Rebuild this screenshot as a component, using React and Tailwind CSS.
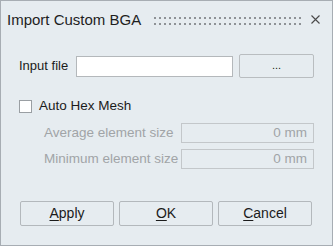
import React from "react";

const font = { fontFamily: '"Liberation Sans", Arial, sans-serif' };

function Grip() {
  // punktierter Griffbereich in der Titelleiste
  const dots = [];
  for (let i = 0; i < 30; i++) {
    dots.push(<rect key={"a" + i} x={i * 5} y={0} width={2} height={2} fill="#8e9296" />);
    dots.push(<rect key={"b" + i} x={i * 5} y={6} width={2} height={2} fill="#8e9296" />);
  }
  return (
    <svg width="148" height="8" viewBox="0 0 148 8" className="shrink-0">
      {dots}
    </svg>
  );
}

function Btn({ u, rest }) {
  return (
    <button className="flex h-[25px] w-[94px] items-center justify-center rounded-[2px] border border-[#b3b8bc] bg-[#e6ecf0] text-[14px] text-[#1b1b1b]">
      <span className="underline underline-offset-2">{u}</span>
      {rest}
    </button>
  );
}

export default function App() {
  return (
    <div
      style={font}
      className="flex h-[246px] w-[333px] flex-col border border-[#a7adb3] bg-[#e6ecf0]"
    >
      {/* Titelleiste */}
      <div className="flex h-[38px] items-center pl-[6px] pr-[10px]">
        <span className="text-[15px] text-[#1e1e1e]">Import Custom BGA</span>
        <div className="ml-[13px] mt-[1px]">
          <Grip />
        </div>
        <svg width="9" height="9" viewBox="0 0 9 9" className="ml-[9px] mt-[-1px]">
          <path d="M0.5 0.5 L8.5 8.5 M8.5 0.5 L0.5 8.5" stroke="#4a4a4a" strokeWidth="1.1" />
        </svg>
      </div>

      <div className="flex flex-col px-[18px]">
        <div className="mt-[15px] flex h-[24px] items-center">
          <span className="w-[57px] text-[13px] text-[#1b1b1b]">Input file</span>
          <div className="h-[21px] w-[157px] border border-[#b4b8bb] bg-white" />
          <button className="ml-[6px] flex h-[24px] flex-1 items-center justify-center rounded-[2px] border border-[#b9bdc0] bg-[#e6ecf0] pb-[2px] text-[11px] text-[#1b1b1b]">
            ...
          </button>
        </div>

        <div className="mt-[22px] flex h-[13px] items-center">
          <div className="h-[13px] w-[13px] border border-[#9a9fa3] bg-white" />
          <span className="ml-[7px] text-[13.5px] text-[#1b1b1b]">Auto Hex Mesh</span>
        </div>

        <div className="mt-[10px] flex h-[20px] items-center pl-[25px]">
          <span className="w-[137px] text-[13.5px] text-[#a1a4a7]">Average element size</span>
          <div className="flex h-[20px] flex-1 items-center justify-end border border-[#c3c7ca] pr-[6px] text-[13.5px] text-[#a1a4a7]">
            0 mm
          </div>
        </div>

        <div className="mt-[6px] flex h-[20px] items-center pl-[25px]">
          <span className="w-[137px] text-[13.5px] text-[#a1a4a7]">Minimum element size</span>
          <div className="flex h-[20px] flex-1 items-center justify-end border border-[#c3c7ca] pr-[6px] text-[13.5px] text-[#a1a4a7]">
            0 mm
          </div>
        </div>

        <div className="mt-[32px] flex gap-[5px] pl-[1px]">
          <Btn u="A" rest="pply" />
          <Btn u="O" rest="K" />
          <Btn u="C" rest="ancel" />
        </div>
      </div>
    </div>
  );
}
